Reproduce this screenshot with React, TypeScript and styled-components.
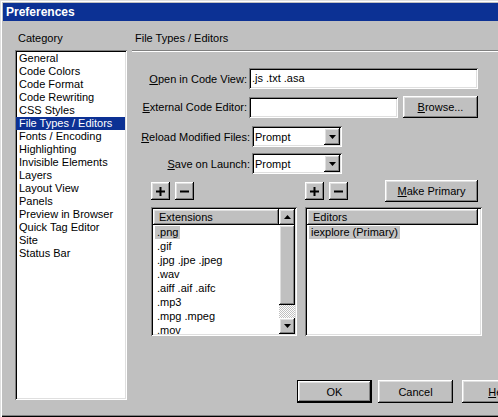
import React from 'react';
import styled, {createGlobalStyle} from 'styled-components';

const GlobalStyle = createGlobalStyle`
  html, body {
    margin: 0;
    padding: 0;
    background: #c0c0c0;
  }
  body {
    font-family: "Liberation Sans", Arial, sans-serif;
    font-size: 11px;
    color: #000;
  }
`;

const raised = `
  box-shadow: inset -1px -1px #000, inset 1px 1px #fff, inset -2px -2px #808080, inset 2px 2px #dfdfdf;
`;

const sunken = `
  box-shadow: inset 1px 1px #808080, inset -1px -1px #fff, inset 2px 2px #000, inset -2px -2px #dfdfdf;
`;

const categories = [
    'General', 'Code Colors', 'Code Format', 'Code Rewriting', 'CSS Styles',
    'File Types / Editors', 'Fonts / Encoding', 'Highlighting', 'Invisible Elements',
    'Layers', 'Layout View', 'Panels', 'Preview in Browser', 'Quick Tag Editor',
    'Site', 'Status Bar',
];

const extensions = [
    '.png', '.gif', '.jpg .jpe .jpeg', '.wav', '.aiff .aif .aifc', '.mp3', '.mpg .mpeg', '.mov',
];

function Triangle({up}: { up?: boolean }) {
    return (
        <svg width="7" height="4" viewBox="0 0 7 4">
            <polygon points={up ? '3.5,0 7,4 0,4' : '0,0 7,0 3.5,4'} fill="#000"/>
        </svg>
    );
}

function PlusIcon() {
    return (
        <svg width="9" height="9" viewBox="0 0 9 9">
            <rect x="3.5" y="0" width="2" height="9" fill="#000"/>
            <rect x="0" y="3.5" width="9" height="2" fill="#000"/>
        </svg>
    );
}

function MinusIcon() {
    return (
        <svg width="9" height="9" viewBox="0 0 9 9">
            <rect x="0" y="3.5" width="9" height="2" fill="#000"/>
        </svg>
    );
}

function Dropdown({value}: { value: string }) {
    return (
        <SelectBox>
            <SelectValue>{value}</SelectValue>
            <DropButton><Triangle/></DropButton>
        </SelectBox>
    );
}

export default function App() {
    return (
        <Screen>
            <GlobalStyle/>
            <Window>
                <TitleBar>Preferences</TitleBar>
                <Body>
                    <CategoryPane>
                        <PaneLabel>Category</PaneLabel>
                        <CategoryList>
                            {categories.map(c => (
                                <CategoryItem key={c} $selected={c === 'File Types / Editors'}>{c}</CategoryItem>
                            ))}
                        </CategoryList>
                    </CategoryPane>

                    <SettingsPane>
                        <SectionHeader>File Types / Editors</SectionHeader>

                        <FieldRow $mt={17} $h={21}>
                            <FieldLabel $w={115}><u>O</u>pen in Code View:</FieldLabel>
                            <TextBox $w={229}>.js .txt .asa</TextBox>
                        </FieldRow>
                        <FieldRow $mt={7} $h={22}>
                            <FieldLabel $w={115}><u>E</u>xternal Code Editor:</FieldLabel>
                            <TextBox $w={149}/>
                            <PushButton $w={75} $h={22} $ml={5}><u>B</u>rowse...</PushButton>
                        </FieldRow>
                        <FieldRow $mt={8} $h={21}>
                            <FieldLabel $w={118}><u>R</u>eload Modified Files:</FieldLabel>
                            <Dropdown value="Prompt"/>
                        </FieldRow>
                        <FieldRow $mt={6} $h={21}>
                            <FieldLabel $w={118}><u>S</u>ave on Launch:</FieldLabel>
                            <Dropdown value="Prompt"/>
                        </FieldRow>

                        <ToolRow>
                            <ToolGroup $w={146}>
                                <IconButton><PlusIcon/></IconButton>
                                <IconButton><MinusIcon/></IconButton>
                            </ToolGroup>
                            <ToolGroup $w={177}>
                                <IconButton><PlusIcon/></IconButton>
                                <IconButton><MinusIcon/></IconButton>
                                <PushButton $w={93} $h={22} $ml={32}><u>M</u>ake Primary</PushButton>
                            </ToolGroup>
                        </ToolRow>

                        <ListsRow>
                            <ListBox $w={146}>
                                <ListContent>
                                    <ColumnHeader $w={126}>Extensions</ColumnHeader>
                                    {extensions.map((e, i) => (
                                        <ListRow key={e}><RowText $selected={i === 0}>{e}</RowText></ListRow>
                                    ))}
                                </ListContent>
                                <ScrollBar>
                                    <ScrollButton><Triangle up/></ScrollButton>
                                    <ScrollThumb/>
                                    <ScrollTrack/>
                                    <ScrollButton><Triangle/></ScrollButton>
                                </ScrollBar>
                            </ListBox>
                            <ListBox $w={177}>
                                <ListContent>
                                    <ColumnHeader $w={171}>Editors</ColumnHeader>
                                    <ListRow><RowText $selected>iexplore (Primary)</RowText></ListRow>
                                </ListContent>
                            </ListBox>
                        </ListsRow>

                        <Footer>
                            <PushButton $w={75} $h={23} $default>OK</PushButton>
                            <PushButton $w={75} $h={23}>Cancel</PushButton>
                            <PushButton $w={75} $h={23} $ml={3}><u>H</u>elp</PushButton>
                        </Footer>
                    </SettingsPane>
                </Body>
            </Window>
        </Screen>
    );
}

const Screen = styled.div`
  width: 498px;
  height: 417px;
  overflow: hidden;
`;

const Window = styled.div`
  width: 552px;
  height: 417px;
  box-sizing: border-box;
  padding: 3px 3px 0;
  background: #c0c0c0;
  box-shadow: inset 1px 1px #dfdfdf, inset 2px 2px #fff, inset -1px -1px #000, inset -2px -2px #808080;
  display: flex;
  flex-direction: column;
`;

const TitleBar = styled.div`
  height: 18px;
  flex: none;
  display: flex;
  align-items: center;
  padding-left: 3px;
  background: #0c3194;
  color: #fff;
  font-weight: bold;
  font-size: 12px;
`;

const Body = styled.div`
  flex: 1;
  display: flex;
  padding: 11px 0 0 12px;
  min-height: 0;
`;

const CategoryPane = styled.div`
  width: 112px;
  flex: none;
  display: flex;
  flex-direction: column;
`;

const PaneLabel = styled.div`
  line-height: 13px;
  padding-left: 3px;
  margin-bottom: 5px;
`;

const CategoryList = styled.div`
  height: 350px;
  box-sizing: border-box;
  padding: 2px 2px 2px 1px;
  background: #fff;
  ${sunken}
`;

const CategoryItem = styled.div<{ $selected?: boolean }>`
  height: 13px;
  line-height: 13px;
  padding-left: 3px;
  white-space: nowrap;
  background: ${p => p.$selected ? '#0c3194' : 'transparent'};
  color: ${p => p.$selected ? '#fff' : '#000'};
`;

const SettingsPane = styled.div`
  flex: 1;
  margin-left: 5px;
  display: flex;
  flex-direction: column;
`;

const SectionHeader = styled.div`
  line-height: 13px;
  padding: 0 0 5px 3px;
  border-bottom: 1px solid #808080;
  box-shadow: 0 1px #fff;
`;

const FieldRow = styled.div<{ $mt: number; $h: number }>`
  display: flex;
  align-items: center;
  margin-top: ${p => p.$mt}px;
  height: ${p => p.$h}px;
`;

const FieldLabel = styled.div<{ $w: number }>`
  width: ${p => p.$w}px;
  margin-right: 2px;
  text-align: right;
  white-space: nowrap;
`;

const TextBox = styled.div<{ $w: number }>`
  width: ${p => p.$w}px;
  height: 21px;
  box-sizing: border-box;
  padding-left: 3px;
  line-height: 21px;
  background: #fff;
  ${sunken}
`;

const SelectBox = styled.div`
  width: 90px;
  height: 21px;
  box-sizing: border-box;
  padding: 2px;
  display: flex;
  align-items: center;
  background: #fff;
  ${sunken}
`;

const SelectValue = styled.div`
  flex: 1;
  padding-left: 1px;
`;

const DropButton = styled.div`
  width: 16px;
  height: 17px;
  display: flex;
  align-items: center;
  justify-content: center;
  background: #c0c0c0;
  ${raised}
`;

const PushButton = styled.div<{ $w: number; $h: number; $ml?: number; $default?: boolean }>`
  width: ${p => p.$w}px;
  height: ${p => p.$h}px;
  flex: none;
  box-sizing: border-box;
  margin-left: ${p => p.$ml ?? 0}px;
  display: flex;
  align-items: center;
  justify-content: center;
  background: #c0c0c0;
  border: ${p => p.$default ? '1px solid #000' : 'none'};
  ${raised}
`;

const ToolRow = styled.div`
  display: flex;
  align-items: center;
  gap: 8px;
  height: 22px;
  margin-top: 6px;
  padding-left: 19px;
`;

const ToolGroup = styled.div<{ $w: number }>`
  width: ${p => p.$w}px;
  display: flex;
  align-items: center;
  gap: 5px;
`;

const IconButton = styled.div`
  width: 19px;
  height: 18px;
  display: flex;
  align-items: center;
  justify-content: center;
  background: #c0c0c0;
  ${raised}
`;

const ListsRow = styled.div`
  display: flex;
  gap: 8px;
  height: 129px;
  margin-top: 5px;
  padding-left: 19px;
`;

const ListBox = styled.div<{ $w: number }>`
  width: ${p => p.$w}px;
  height: 129px;
  box-sizing: border-box;
  padding: 2px;
  display: flex;
  background: #fff;
  ${sunken}
`;

const ListContent = styled.div`
  flex: 1;
  overflow: hidden;
`;

const ColumnHeader = styled.div<{ $w: number }>`
  width: ${p => p.$w}px;
  height: 16px;
  box-sizing: border-box;
  padding-left: 6px;
  line-height: 16px;
  background: #c0c0c0;
  ${raised}
`;

const ListRow = styled.div`
  height: 14px;
  padding: 1px 0 0 2px;
  box-sizing: border-box;
  white-space: nowrap;
`;

const RowText = styled.span<{ $selected?: boolean }>`
  display: inline-block;
  height: 13px;
  line-height: 13px;
  padding: 0 2px;
  background: ${p => p.$selected ? '#c4c4c4' : 'transparent'};
`;

const ScrollBar = styled.div`
  width: 16px;
  display: flex;
  flex-direction: column;
`;

const ScrollButton = styled.div`
  height: 16px;
  flex: none;
  display: flex;
  align-items: center;
  justify-content: center;
  background: #c0c0c0;
  ${raised}
`;

const ScrollThumb = styled.div`
  height: 80px;
  flex: none;
  background: #c0c0c0;
  ${raised}
`;

const ScrollTrack = styled.div`
  flex: 1;
  background: repeating-conic-gradient(#fff 0 25%, #c0c0c0 0 50%) 0 0 / 2px 2px;
`;

const Footer = styled.div`
  display: flex;
  gap: 6px;
  margin-top: 44px;
  padding-left: 165px;
`;
